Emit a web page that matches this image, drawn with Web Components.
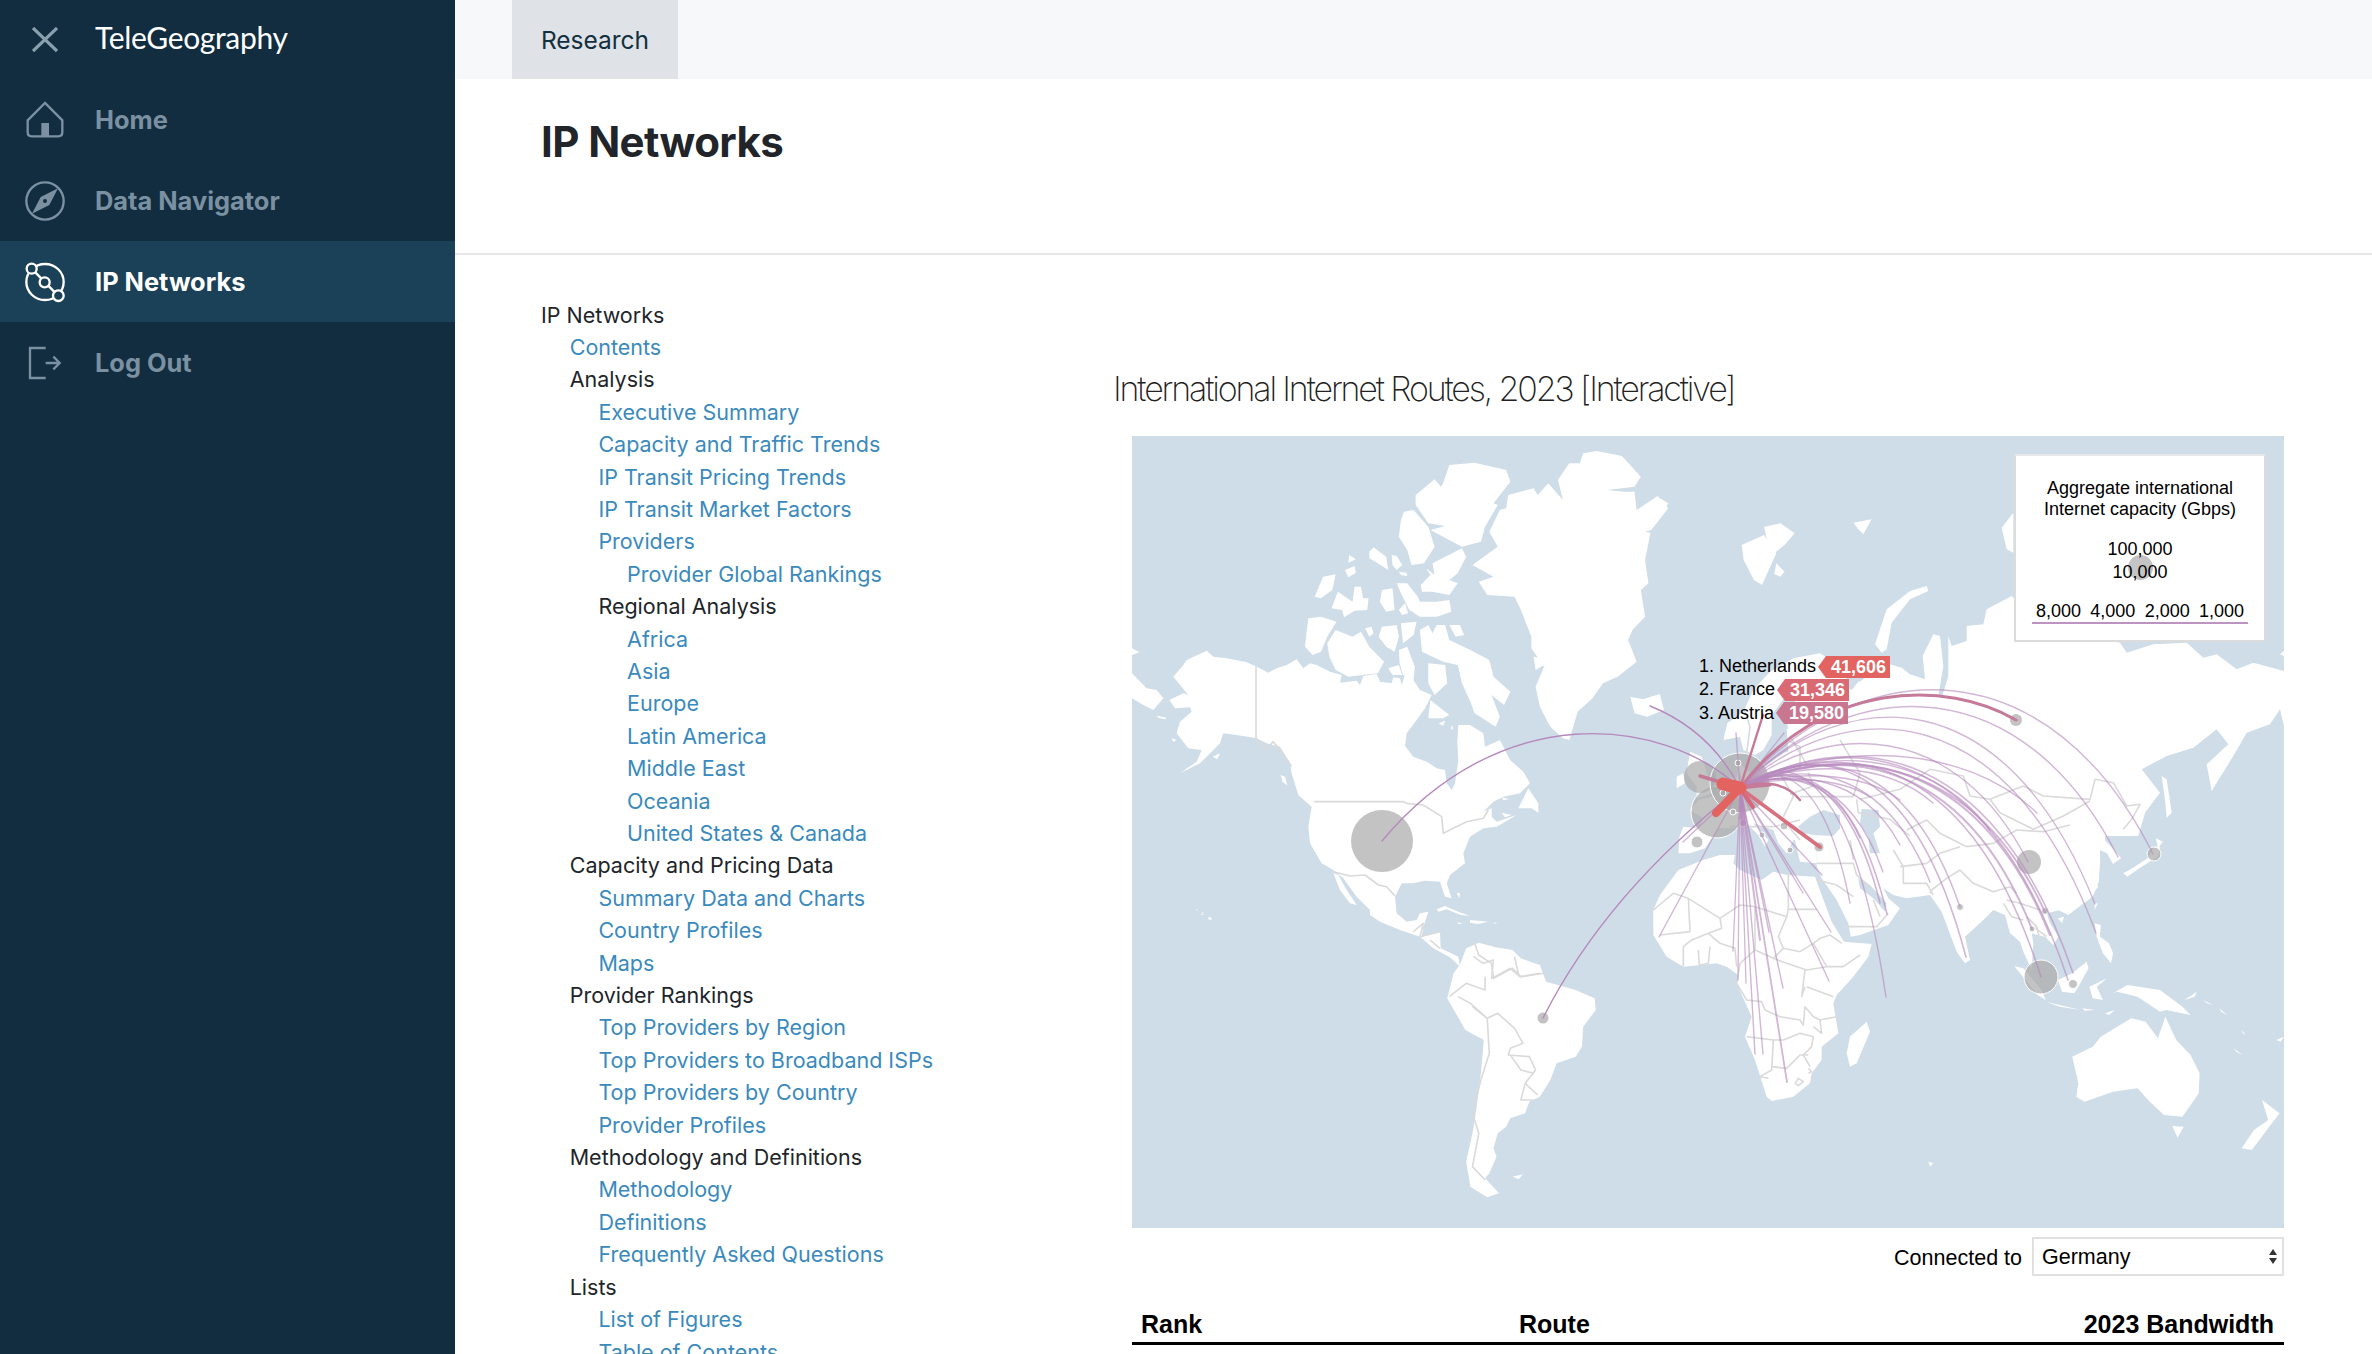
<!DOCTYPE html>
<html>
<head>
<meta charset="utf-8">
<title>IP Networks</title>
<style>
  html, body { margin: 0; height: 1354px; overflow: hidden; background: #fff; }
  body { display: flex; font-family: Inter, "Liberation Sans", sans-serif; }
</style>
</head>
<body>
<side-bar>
  <nav-item icon="home" label="Home"></nav-item>
  <nav-item icon="compass" label="Data Navigator"></nav-item>
  <nav-item icon="network" label="IP Networks" active></nav-item>
  <nav-item icon="logout" label="Log Out"></nav-item>
</side-bar>
<main-page>
  <toc-node slot="toc" label="IP Networks">
    <toc-node label="Contents" link></toc-node>
    <toc-node label="Analysis">
      <toc-node label="Executive Summary" link></toc-node>
      <toc-node label="Capacity and Traffic Trends" link></toc-node>
      <toc-node label="IP Transit Pricing Trends" link></toc-node>
      <toc-node label="IP Transit Market Factors" link></toc-node>
      <toc-node label="Providers" link>
        <toc-node label="Provider Global Rankings" link></toc-node>
      </toc-node>
      <toc-node label="Regional Analysis">
        <toc-node label="Africa" link></toc-node>
        <toc-node label="Asia" link></toc-node>
        <toc-node label="Europe" link></toc-node>
        <toc-node label="Latin America" link></toc-node>
        <toc-node label="Middle East" link></toc-node>
        <toc-node label="Oceania" link></toc-node>
        <toc-node label="United States &amp; Canada" link></toc-node>
      </toc-node>
    </toc-node>
    <toc-node label="Capacity and Pricing Data">
      <toc-node label="Summary Data and Charts" link></toc-node>
      <toc-node label="Country Profiles" link></toc-node>
      <toc-node label="Maps" link></toc-node>
    </toc-node>
    <toc-node label="Provider Rankings">
      <toc-node label="Top Providers by Region" link></toc-node>
      <toc-node label="Top Providers to Broadband ISPs" link></toc-node>
      <toc-node label="Top Providers by Country" link></toc-node>
      <toc-node label="Provider Profiles" link></toc-node>
    </toc-node>
    <toc-node label="Methodology and Definitions">
      <toc-node label="Methodology" link></toc-node>
      <toc-node label="Definitions" link></toc-node>
      <toc-node label="Frequently Asked Questions" link></toc-node>
    </toc-node>
    <toc-node label="Lists">
      <toc-node label="List of Figures" link></toc-node>
      <toc-node label="Table of Contents" link></toc-node>
    </toc-node>
  </toc-node>
  <route-chart slot="chart"></route-chart>
</main-page>

<script>
const ICONS = {
  home: `<svg viewBox="70 298 126 126" fill="none" stroke="currentColor" stroke-width="7"><path d="M81 362 L133 310 L185 362 V398 Q185 410 173 410 H93 Q81 410 81 398 Z"/><rect x="122" y="370" width="23" height="40" fill="currentColor" stroke="none"/></svg>`,
  compass: `<svg viewBox="70 537 126 126" fill="none" stroke="currentColor" stroke-width="7"><circle cx="133" cy="600" r="56"/><path d="M172 562 L120 588 L94 638 L146 612 Z" fill="currentColor" stroke="none"/><circle cx="133" cy="600" r="6" fill="#112d3f" stroke="none"/></svg>`,
  network: `<svg viewBox="70 780 126 126" fill="none" stroke="currentColor" stroke-width="7"><ellipse cx="133" cy="843" rx="56" ry="54"/><path d="M93 803 L172 884"/><circle cx="93" cy="803" r="15" fill="#1b4158"/><circle cx="132" cy="844" r="15" fill="#1b4158"/><circle cx="173" cy="884" r="16" fill="#1b4158"/></svg>`,
  logout: `<svg viewBox="70 1022 126 126" fill="none" stroke="currentColor" stroke-width="7"><path d="M135 1040 H88 V1130 H135"/><path d="M135 1085 H177 M158 1066 L177 1085 L158 1104"/></svg>`
};

class SideBar extends HTMLElement {
  connectedCallback() {
    this.attachShadow({ mode: 'open' });
    this.shadowRoot.innerHTML = `
      <style>
        :host { display: block; flex: 0 0 455px; height: 1354px; background: #112d3f; }
        .brand { display: flex; align-items: center; height: 79px; padding-left: 32px; }
        .brand svg { width: 26px; height: 26px; margin-right: 37px; }
        .brand span { font: 400 30px Lato, sans-serif; color: #fff; letter-spacing: -.35px; margin-bottom: 6px; }
      </style>
      <div class="brand">
        <svg viewBox="0 0 26 26" fill="none" stroke="#8aa0ae" stroke-width="3.2"><path d="M1 1 L25 24 M25 1 L1 24"/></svg>
        <span>TeleGeography</span>
      </div>
      <slot></slot>
    `;
  }
}
customElements.define('side-bar', SideBar);

class NavItem extends HTMLElement {
  connectedCallback() {
    this.attachShadow({ mode: 'open' });
    this.shadowRoot.innerHTML = `
      <style>
        :host { display: flex; align-items: center; height: 81px; padding-left: 24px; color: #7b91a2; font: 700 25.4px Inter, sans-serif; }
        :host([active]) { background: #1b4158; color: #fff; }
        .icon { width: 42px; height: 42px; margin-right: 29px; }
        .icon svg { display: block; width: 42px; height: 42px; }
      </style>
      <div class="icon">${ICONS[this.getAttribute('icon')]}</div>
      <span>${this.getAttribute('label')}</span>
    `;
  }
}
customElements.define('nav-item', NavItem);

class MainPage extends HTMLElement {
  connectedCallback() {
    this.attachShadow({ mode: 'open' });
    this.shadowRoot.innerHTML = `
      <style>
        :host { display: block; flex: 1; min-width: 0; height: 1354px; color: #212529; }
        .top { height: 79px; background: #f7f8fa; padding-left: 57px; display: flex; }
        .tab { width: 166px; background: #dfe2e6; color: #12303f; font-size: 24.5px; display: flex; align-items: center; justify-content: center; }
        .head { height: 176px; box-sizing: border-box; border-bottom: 2px solid #e4e6eb; padding: 38px 0 0 86px; }
        h1 { margin: 0; font-size: 42px; line-height: 50px; font-weight: 700; letter-spacing: -.6px; color: #212529; }
        .body { display: grid; grid-template-columns: 572px 1171px; padding: 43.5px 0 0 86px; }
      </style>
      <div class="top"><div class="tab">Research</div></div>
      <div class="head"><h1>IP Networks</h1></div>
      <div class="body">
        <div><slot name="toc"></slot></div>
        <div><slot name="chart"></slot></div>
      </div>
    `;
  }
}
customElements.define('main-page', MainPage);

class TocNode extends HTMLElement {
  connectedCallback() {
    this.attachShadow({ mode: 'open' });
    const link = this.hasAttribute('link');
    this.shadowRoot.innerHTML = `
      <style>
        :host { display: block; font: 400 21.5px/32.4px Inter, sans-serif; color: #212529; }
        a { color: #3a8abd; text-decoration: none; }
        .kids { padding-left: 28.7px; }
      </style>
      <div>${link ? `<a href="#">${this.getAttribute('label').replace('&', '&amp;')}</a>` : this.getAttribute('label')}</div>
      <div class="kids"><slot></slot></div>
    `;
  }
}
customElements.define('toc-node', TocNode);

class RouteChart extends HTMLElement {
  connectedCallback() {
    this.attachShadow({ mode: 'open' });
    this.shadowRoot.innerHTML = `
      <style>
        :host { display: block; color: #000; font-family: "Liberation Sans", Arial, sans-serif; }
        h2 { margin: 70.5px 0 27px; font: 200 34px/40px Inter, sans-serif; letter-spacing: -2.14px; color: #222; }
        .inner { margin-left: 19px; }
        .filter { display: flex; justify-content: flex-end; align-items: center; gap: 10px; margin-top: 9px; font-size: 21.5px; }
        .filter > span { padding-top: 3px; }
        .select { position: relative; width: 252px; height: 39px; }
        select { appearance: none; -webkit-appearance: none; width: 100%; height: 100%; box-sizing: border-box; border: 2px solid #e0e0e0; background: #fff; font: 21.5px "Liberation Sans", sans-serif; padding: 0 8px; color: #000; border-radius: 0; margin: 0; }
        .select svg { position: absolute; right: 6px; top: 12px; width: 10px; height: 15px; }
        .thead { display: grid; grid-template-columns: 378px 1fr auto; padding: 0 10px 0 9px; margin-top: 30px; border-bottom: 3px solid #000; font: 700 25px/36px "Liberation Sans", sans-serif; }
      </style>
      <h2>International Internet Routes, 2023 [Interactive]</h2>
      <div class="inner">
        <route-map></route-map>
        <div class="filter">
          <span>Connected to</span>
          <div class="select">
            <select><option>Germany</option></select>
            <svg viewBox="0 0 10 15" fill="#333"><path d="M5 0 L9 6 H1 Z M5 15 L1 9 H9 Z"/></svg>
          </div>
        </div>
        <div class="thead"><span>Rank</span><span>Route</span><span>2023 Bandwidth</span></div>
      </div>
    `;
  }
}
customElements.define('route-chart', RouteChart);

// land traced off the reference, each group in the coordinates of the crop it was read from
const GROUPS = {
  a: 'translate(1130 620) scale(.33333)',
  b: 'translate(1100 420) scale(.42088 .33333)',
  c: 'translate(1100 840) scale(.42088 .33333)',
  d: 'translate(1770 436) scale(.33333)',
  e: 'translate(1640 820) scale(.33333)',
  f: 'translate(1660 840) scale(.40816 .33333)',
  g: 'translate(1640 640) scale(.33333)',
  h: 'translate(1660 430) scale(.40816 .33333)'
};

const LAND = {
  a: [
    '130,170 160,135 170,120 230,92 250,110 290,115 350,127 380,140 415,158 440,145 470,135 500,118 520,145 540,130 560,135 600,155 635,165 630,188 680,182 690,195 700,168 740,162 750,185 785,190 790,172 810,175 815,195 830,150 870,210 905,225 885,265 860,300 830,340 825,378 850,410 890,425 920,445 945,450 950,490 965,510 975,490 985,420 982,370 985,315 1020,315 1060,340 1065,380 1110,360 1140,420 1180,455 1200,490 1170,520 1120,530 1090,545 1060,575 1085,565 1085,590 1100,605 1160,585 1100,620 1060,625 1020,650 1000,700 1005,730 960,765 950,790 965,835 945,830 930,785 885,782 850,790 815,790 795,830 800,880 830,905 860,900 870,880 895,875 880,920 875,950 930,935 932,985 985,1010 990,1040 960,1012 910,985 870,950 810,930 750,905 720,885 720,870 680,830 640,775 610,750 575,730 540,670 535,620 545,560 505,525 485,460 480,430 450,380 410,370 380,355 320,345 280,340 270,370 245,395 210,430 150,460 200,425 215,390 175,385 140,340 150,305 185,275 180,262 135,265 118,240 160,220 175,225',
    '610,760 625,765 650,810 680,855 660,850 630,810',
    '6,160 50,205 80,210 100,235 70,270 40,255 6,235',
    '6,85 28,97 6,105', '80,287 110,293 105,298 85,293', '125,355 140,360 130,365', '248,410 270,400 262,418',
    '452,465 465,470 472,497 458,485', '920,868 945,858 985,875 1020,888 990,884 950,868 925,875',
    '1020,900 1075,905 1045,912 1020,908', '982,907 1000,910 985,912', '1090,908 1103,908 1095,911',
    '980,818 990,820 988,835', '1165,565 1195,505 1225,550 1225,578 1205,565', '1115,532 1138,538 1120,540',
    '1115,578 1145,585 1125,592', '238,890 246,897 240,900', '198,868 202,868 200,871', '215,875 222,878 218,880'
  ],
  b: [
    '1148,100 1180,93 1240,108 1285,170 1270,200 1205,210 1245,215 1270,215 1275,270 1325,228 1350,265 1310,330 1295,335 1308,338 1295,420 1303,490 1285,510 1295,590 1265,630 1255,660 1275,725 1230,770 1195,790 1170,835 1135,875 1115,960 1100,955 1070,920 1045,860 1035,800 1055,740 1025,685 1025,650 1000,570 985,530 920,525 900,485 935,470 885,435 945,380 925,335 950,270 965,265 970,225 1030,205 1040,225 1065,190 1100,240 1088,180 1115,130 1140,130',
    '815,190 830,135 890,128 965,150 975,185 935,250 945,255 915,320 905,365 860,380 785,330 820,318 780,310 750,255 750,225 795,178 810,200',
    '722,275 745,270 780,320 795,380 770,430 740,435 730,390 710,350 715,300',
    '860,385 870,410 850,460 830,480 850,490 830,525 790,515 765,515 762,495 785,465 775,445 795,465 790,430',
    '640,395 650,382 680,410 685,450 660,430 640,415', '693,405 705,408 718,435 705,450 695,435',
    '710,455 728,458 730,468 715,465', '592,405 608,418 590,428', '582,450 605,438 608,458 590,472',
    '510,530 530,470 560,463 552,510 525,535',
    '550,565 565,515 600,545 605,500 620,500 625,535 638,535 635,570 605,572 580,592 575,570',
    '670,510 695,505 700,570 680,575 665,545',
    '705,490 730,490 755,530 760,545 800,545 830,540 835,575 800,590 760,590 735,570 715,520',
    '710,570 725,550 732,580 718,585',
    '495,595 525,590 562,605 540,650 525,695 505,705 487,680',
    '540,670 560,630 600,650 620,635 640,680 675,725 660,760 590,770 560,750 545,710',
    '630,625 645,620 650,640 640,650', '670,620 705,615 710,650 700,695 680,680 662,650',
    '715,610 752,605 745,645 720,670',
    '760,630 780,615 790,640 800,615 820,615 830,660 880,690 925,720 935,770 975,815 960,855 930,825 950,890 940,920 890,880 880,845 860,790 850,735 815,725 765,695',
    '830,615 855,615 865,645 845,650',
    '710,690 730,680 748,740 745,780 720,765 712,730', '685,745 710,735 718,765 695,765',
    '780,730 820,735 825,790 795,825 780,790', '785,840 830,885 815,895 780,895',
    '805,910 820,902 815,918', '835,915 840,925 835,930', '1030,710 1050,715 1055,735 1035,750',
    '1260,830 1290,838 1330,822 1340,870 1300,890 1270,880'
  ],
  c: [
    '855,375 870,325 900,308 940,322 980,330 1000,355 1045,375 1060,425 1130,450 1175,475 1178,510 1148,560 1145,620 1130,650 1085,670 1070,720 1045,770 1020,785 1010,820 975,835 965,860 945,880 935,925 942,950 925,1000 915,1015 948,1060 920,1072 880,1040 870,965 885,880 895,800 905,700 912,600 868,570 825,475 840,400',
    '980,1010 1005,1003 995,1018', '228,208 232,210 230,212', '240,220 246,224 242,226', '258,230 265,235 258,240'
  ],
  d: [
    '230,800 265,740 300,715 345,680 395,695 420,715 465,730 458,660 490,595 510,600 520,690 505,780 515,785 535,720 535,600 545,630 590,615 590,570 640,565 650,520 725,480 800,560 1050,620 1070,650 1150,625 1250,620 1300,665 1340,655 1400,700 1450,680 1542,705 1542,870 1530,820 1500,865 1430,890 1390,960 1325,1065 1310,985 1375,925 1340,880 1270,935 1190,960 1115,1000 1170,1070 1125,1130 1105,1200 60,1200 60,1000 50,880',
    '315,625 350,520 420,465 470,450 475,465 420,490 365,560 350,640 335,650',
    '1175,1020 1190,1030 1205,1130 1190,1145 1185,1090',
    '250,260 305,250 280,295 265,280', '730,230 695,275 710,340 730,350',
    '1530,655 1542,645 1542,660'
  ],
  e: [
    '40,270 60,225 115,150 190,120 240,105 285,105 280,130 300,150 365,180 400,155 440,165 525,170 545,225 575,305 612,365 695,372 685,410 640,470 590,525 580,550 595,640 545,680 545,720 515,760 510,790 460,830 395,843 380,830 345,720 315,650 335,590 290,490 295,465 260,440 230,430 130,440 80,410 40,345',
    '680,605 690,635 650,730 630,740 620,700 630,650',
    '530,-100 530,140 545,175 590,240 625,310 632,350 660,345 745,315 780,265 745,235 730,205 760,225 800,235 870,225 905,275 950,395 975,430 990,420 975,350 1030,300 1060,270 1095,285 1110,340 1140,365 1150,395 1175,450 1180,370 1175,340 1215,350 1240,375 1255,350 1230,310 1220,280 1260,270 1340,240 1375,200 1350,165 1380,130 1380,-100',
    '115,100 118,50 130,20 175,25 190,-5 150,-30 175,-60 215,-70 240,-110 290,-130 300,-170 330,-140 360,-150 430,-200 470,-215 450,-245 470,-290 700,-300 700,50 530,60 460,60 440,100 415,70 400,30 340,10 385,60 375,80 355,45 310,0 285,25 235,25 195,85 150,100',
    '465,60 530,60 530,130 480,125',
    '865,1025 880,1030 870,1040'
  ],
  f: [
    '1000,-100 1095,-100 1090,0 1130,55 1110,72 1095,40 1060,20 1040,30 1078,70 1075,125 1060,170 1000,225 960,200',
    '1135,100 1150,90 1195,55 1210,20 1225,20 1220,50 1180,80 1145,110', '1215,-5 1232,5 1220,25',
    '1065,190 1072,190 1065,210', '975,235 990,230 985,250',
    '1065,250 1080,255 1078,290 1100,310 1110,340 1105,370 1085,340 1070,290',
    '868,378 890,385 935,450 945,480 925,465', '975,420 1010,400 1045,365 1050,385 1025,440 1015,460 985,455',
    '1052,440 1095,415 1070,440 1085,480 1060,475', '945,485 1030,510 980,500', '1035,505 1065,510 1040,512', '1090,520 1115,510 1100,525',
    '1110,460 1145,435 1225,450 1280,500 1300,525 1240,510 1225,515 1170,470 1120,455', '1285,480 1315,455 1310,470',
    '1330,480 1355,495 1340,490', '1370,505 1390,525 1375,515',
    '1010,650 1060,620 1080,590 1120,560 1155,535 1190,545 1220,595 1238,530 1265,600 1300,645 1322,700 1320,760 1280,830 1235,825 1200,785 1170,745 1110,755 1040,785 1020,770 1025,730',
    '1255,858 1283,860 1268,893', '1475,780 1518,820 1490,865 1450,930 1425,925 1455,870 1490,840',
    '1405,625 1428,645 1412,635', '1510,600 1528,590 1520,605', '1425,570 1435,585 1428,580'
  ],
  g: [
    '250,300 262,250 310,215 340,150 390,95 460,55 540,40 640,100 600,130 635,150 655,125 700,120 700,250 450,300 440,240 470,175 440,165 395,225 395,285 370,330 345,345 310,330 300,290',
    '150,335 185,350 210,430 220,460 170,475 170,440 140,400', '110,410 130,400 135,430 110,445'
  ],
  h: [
    '200,345 255,315 285,370 250,465 230,450 205,390', '255,290 295,280 330,310 305,345 280,370 262,330',
    '285,400 305,425 295,440 280,432', '0,205 20,220 0,265'
  ]
};

const SEAS = {
  e: [
    '655,175 690,195 740,250 735,275 700,235 660,205',
    '474,20 510,-10 550,-30 600,-15 600,25 580,48 520,45 490,40',
    '665,-33 715,-30 720,20 700,40 720,100 690,100 685,50 660,10'
  ]
};

const BORDERS = {
  a: [
    '378,140 378,355 410,385 430,365 465,410 485,440',
    '552,545 820,545 830,550 880,555 935,590 940,640 970,625 1010,605 1060,595 1075,570',
    '610,755 660,768 705,765 745,795 770,800 795,828',
    '850,935 880,910 870,950 930,935', '900,960 930,985', '1030,1010 1060,1030 1090,1020 1085,1075 1140,1045 1170,1070 1240,1060'
  ],
  c: [
    '890,310 900,345 930,370 935,415 980,385 1000,410 1045,400',
    '985,350 995,405', '830,470 870,430 915,450 915,410', '850,470 880,490 920,535 945,520 985,565 1005,610 975,625 970,645 1020,650 1035,690 1010,730 1000,780 1030,780',
    '885,500 920,535 925,640 905,720 885,820 900,880 885,980 915,1020',
    '1010,730 1040,765', '975,645 1000,690 1030,700'
  ],
  d: [
    '270,1090 390,1060 480,1000 580,1020 600,1080 660,1090 760,1050 820,1080 960,1090 975,1030 1030,1040 1070,1110 1110,1105 1085,1150 1060,1180',
    '660,1090 690,1130 790,1180 880,1140 960,1095',
    '115,1010 130,1050 60,1075', '60,900 110,985', '260,1090 265,1130 360,1150 420,1200'
  ],
  e: [
    '40,270 100,220 145,235 240,295 300,255 345,260 440,290 445,268 530,268', '445,160 445,268',
    '145,235 150,335 60,345', '240,295 245,325 205,340 155,360 130,380 130,440',
    '205,340 240,370 285,385 290,440', '175,390 178,435 205,430 210,380',
    '345,260 345,390 300,430 290,490', '345,390 400,415 430,385 415,350 440,290',
    '430,385 480,395 520,370 540,355 570,345 605,370', '520,370 560,440 610,440 660,405',
    '400,415 440,430 500,450 560,440', '290,490 320,540 365,545 375,570 420,590 480,600 490,615 495,560 520,590 540,600 590,590',
    '495,500 485,530 495,450', '500,500 580,530', '320,650 400,660 430,660 480,640 520,650 515,680 490,705 510,740',
    '400,660 395,750 360,770 385,775', '395,740 440,745 480,705 505,705', '540,600 545,640 520,620',
    '465,790 475,775 490,785 475,797 465,790', '505,745 515,755 505,760',
    '530,130 640,130 650,165 690,200', '630,60 640,120', '760,90 790,140 790,190 860,190 880,225',
    '530,180 590,195 640,230', '620,320 710,320 745,280', '700,240 720,290', '870,220 875,210 920,175 960,150',
    '780,140 860,130 900,100 960,80', '960,150 1000,190 1060,215 1110,200 1130,220',
    '1090,250 1115,290 1150,300', '1200,270 1140,250 1100,240', '1180,320 1220,350', '1160,290 1190,320 1200,360',
    '800,30 860,0 900,40 980,80', '980,80 1060,70 1130,30 1210,35 1290,15'
  ],
  g: [
    '310,200 330,260 320,340', '440,300 480,320 480,380 420,400', '420,400 460,470 430,530', '300,400 320,560', '270,560 400,560 480,540',
    '420,530 480,600', '600,300 660,400 640,470', '480,470 640,470'
  ]
};

const BUBBLES = [
  [1382, 841, 31, 0], [1543, 1018, 5.5, 0], [1717, 812, 26, 1], [1700, 777, 16, 0], [1740, 783, 30, 1],
  [1697, 842, 6, 1], [1819, 847, 5, 1], [2016, 720, 6, 0], [2029, 862, 12, 0], [2154, 854, 7, 1],
  [2041, 977, 17, 1], [2073, 984, 4.5, 1], [1960, 907, 3.5, 1], [2045, 911, 3.5, 1], [2032, 929, 3, 1],
  [1738, 763, 3, 1], [1723, 793, 3, 1], [1733, 812, 3, 1], [1743, 823, 4, 1], [1784, 826, 4, 1], [1762, 835, 3, 1], [1790, 850, 3, 1]
];

const HUB = [1740, 788];
const LIGHT = '#b689bd';
const DEEP = '#c67a99';

// [end x, end y, peak y (null = straight), width, colour]
const ROUTES = [
  [1683, 842, null, 1.4, LIGHT], [1659, 937, null, 1.4, LIGHT],
  [1733, 951, null, 1.3, LIGHT], [1738, 980, null, 1.3, LIGHT], [1746, 983, null, 1.3, LIGHT], [1755, 1054, null, 1.4, LIGHT],
  [1763, 1054, null, 1.4, LIGHT], [1787, 1082, null, 1.8, LIGHT], [1783, 988, null, 1.4, LIGHT], [1769, 932, null, 1.4, LIGHT],
  [1760, 940, null, 2, LIGHT], [1829, 981, null, 1.4, LIGHT], [1886, 997, 788, 1.4, LIGHT], [1831, 932, null, 1.4, LIGHT],
  [1803, 893, null, 1.4, LIGHT], [1822, 875, null, 1.4, LIGHT], [1850, 903, 784, 1.4, LIGHT], [1887, 914, 784, 1.6, LIGHT],
  [1880, 903, 784, 1.6, LIGHT], [1883, 872, 785, 1.4, LIGHT], [1900, 845, 782, 1.4, LIGHT], [1860, 838, 782, 1.4, LIGHT],
  [1930, 882, 780, 1.4, LIGHT], [1966, 957, 776, 1.6, LIGHT], [1960, 907, 772, 1.4, LIGHT], [2028, 862, 746, 1.4, LIGHT],
  [2041, 977, 775, 1.6, LIGHT], [2073, 973, 768, 1.6, LIGHT], [2068, 980, 770, 1.6, LIGHT], [2045, 912, 772, 2, LIGHT],
  [2032, 929, 774, 2, LIGHT], [2050, 935, 773, 2, LIGHT], [2096, 933, 735, 1.4, LIGHT], [2095, 904, 721, 1.4, LIGHT],
  [2153, 854, 691, 1.4, LIGHT], [2118, 857, 708, 1.4, LIGHT], [2037, 813, 756, 1.4, LIGHT], [1933, 803, 769, 1.4, LIGHT],
  [1990, 830, 762, 1.4, LIGHT], [1900, 800, 776, 1.4, LIGHT], [1870, 797, 780, 1.4, LIGHT], [1784, 733, null, 1.4, LIGHT],
  [1736, 733, null, 1.4, LIGHT], [1800, 800, 784, 2.4, DEEP], [2016, 720, 698, 3, DEEP], [1763, 715, null, 2.4, DEEP],
  [1700, 776, null, 3.4, DEEP], [1753, 807, null, 4, '#d4697c'], [1743, 823, null, 4, LIGHT], [1820, 847, null, 3.8, '#d8707f'],
  [1770, 785, null, 3, DEEP], [1716, 813, null, 8, '#e2635f'], [1723, 784, null, 13, '#e2635f']
];

function routePath(r) {
  const [x0, y0] = HUB;
  const [x1, y1, peak] = r;
  if (peak === null) return `M${x0} ${y0} L${x1} ${y1}`;
  const h = (8 * peak - y0 - y1) / 6;
  const dx = x1 - x0;
  return `M${x0} ${y0} C${x0 + dx * .3} ${h} ${x0 + dx * .75} ${h} ${x1} ${y1}`;
}

class RouteMap extends HTMLElement {
  connectedCallback() {
    this.attachShadow({ mode: 'open' });
    const group = (set, tag) => Object.keys(set).map(k =>
      `<g transform="${GROUPS[k]}">${set[k].map(p => `<${tag} points="${p}" vector-effect="non-scaling-stroke"/>`).join('')}</g>`).join('');
    const usa = 'M1740 788 C1660 715 1500 700 1382 841';
    const brazil = 'M1740 788 Q1606 893 1543 1018';
    const iceland = 'M1740 788 Q1710 730 1650 706';
    this.shadowRoot.innerHTML = `
      <style>
        :host { display: block; position: relative; width: 1152px; height: 792px; background: #cfdde8; overflow: hidden; }
        svg { display: block; width: 1152px; height: 792px; }
        .rows { position: absolute; left: 567px; top: 219.5px; }
        map-label { margin-bottom: 1.4px; }
        map-legend { position: absolute; left: 882px; top: 18px; }
      </style>
      <svg viewBox="1132 436 1152 792">
        <g fill="#fff">${group(LAND, 'polygon')}</g>
        <g fill="#cfdde8">${group(SEAS, 'polygon')}</g>
        <g fill="none" stroke="#dadada" stroke-width="1.6" stroke-linejoin="round">${group(BORDERS, 'polyline')}</g>
        <g>${BUBBLES.map(b => `<circle cx="${b[0]}" cy="${b[1]}" r="${b[2]}" fill="#a9a9a9" fill-opacity=".7" ${b[3] ? 'stroke="#fff" stroke-width="1"' : ''}/>`).join('')}</g>
        <g fill="none" stroke-linecap="round">
          <path d="${usa}" stroke="${LIGHT}" stroke-width="1.4"/>
          <path d="${brazil}" stroke="${LIGHT}" stroke-width="1.4"/>
          <path d="${iceland}" stroke="${LIGHT}" stroke-width="1.4"/>
          ${ROUTES.map(r => `<path d="${routePath(r)}" stroke="${r[4]}" stroke-width="${r[3]}" stroke-opacity="${r[4] === LIGHT ? .62 : 1}"/>`).join('')}
        </g>
      </svg>
      <div class="rows">
        <map-label name="1. Netherlands" value="41,606" color="#e2635f"></map-label>
        <map-label name="2. France" value="31,346" color="#d96a74"></map-label>
        <map-label name="3. Austria" value="19,580" color="#c97791"></map-label>
      </div>
      <map-legend></map-legend>
    `;
  }
}
customElements.define('route-map', RouteMap);

class MapLabel extends HTMLElement {
  connectedCallback() {
    this.attachShadow({ mode: 'open' });
    this.shadowRoot.innerHTML = `
      <style>
        :host { display: flex; align-items: center; height: 22px; font: 18px "Liberation Sans", sans-serif; color: #000; }
        .chip { position: relative; margin-left: 10px; height: 22px; padding: 0 4px 0 5px; line-height: 22px; background: ${this.getAttribute('color')}; color: #fff; font-weight: 700; }
        .chip::before { content: ""; position: absolute; left: -8px; top: 0; border-style: solid; border-width: 11px 8px 11px 0; border-color: transparent ${this.getAttribute('color')} transparent transparent; }
      </style>
      <span>${this.getAttribute('name')}</span>
      <span class="chip">${this.getAttribute('value')}</span>
    `;
  }
}
customElements.define('map-label', MapLabel);

class MapLegend extends HTMLElement {
  connectedCallback() {
    this.attachShadow({ mode: 'open' });
    this.shadowRoot.innerHTML = `
      <style>
        :host { display: block; box-sizing: border-box; width: 252px; height: 188px; background: #fff; border: 2px solid #dcdcdc; border-top-color: #e8e8e8; color: #000; font: 18px/21px "Liberation Sans", sans-serif; text-align: center; padding-top: 22px; }
        .sizes { position: relative; margin-top: 18px; line-height: 23px; }
        .dot { position: absolute; left: 50%; top: 17px; width: 25px; height: 25px; margin-left: -12.5px; border-radius: 50%; background: #c4c4c4; }
        .sizes span { position: relative; display: block; }
        .widths { display: flex; justify-content: space-between; margin: 16px 16px 0; padding: 0 4px 0; border-bottom: 2px solid #bd93c2; line-height: 22px; }
      </style>
      <div>Aggregate international<br>Internet capacity (Gbps)</div>
      <div class="sizes"><div class="dot"></div><span>100,000</span><span>10,000</span></div>
      <div class="widths"><span>8,000</span><span>4,000</span><span>2,000</span><span>1,000</span></div>
    `;
  }
}
customElements.define('map-legend', MapLegend);
</script>
</body>
</html>
